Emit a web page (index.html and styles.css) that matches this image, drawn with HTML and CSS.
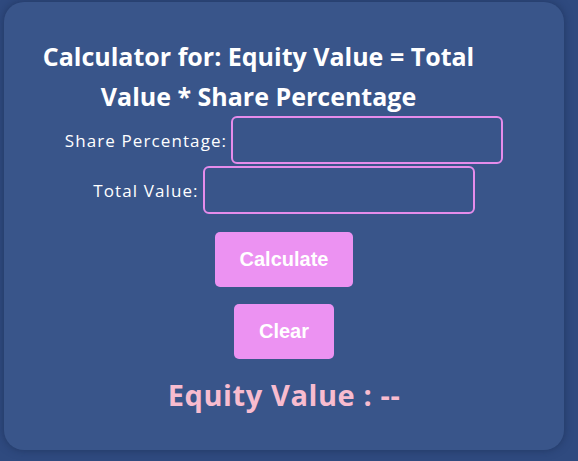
FILE: index.html
```html
<!DOCTYPE html>
<html lang="en">
<head>
<meta charset="utf-8">
<title>Equity Value Calculator</title>
<link rel="stylesheet" href="styles.css">
</head>
<body>
<main class="card">
  <h1 class="title">Calculator for: Equity Value = Total Value * Share Percentage</h1>
  <div class="row">
    <label class="label" for="share">Share Percentage:</label>
    <input class="field" id="share" type="text">
  </div>
  <div class="row">
    <label class="label" for="total">Total Value:</label>
    <input class="field" id="total" type="text">
  </div>
  <button class="btn btn-first" type="button">Calculate</button>
  <button class="btn" type="button">Clear</button>
  <p class="result">Equity Value : --</p>
</main>
</body>
</html>
```
FILE: styles.css
```css
html, body {
  margin: 0;
  padding: 0;
}
body {
  background: #2f4a7f;
  width: 578px;
  height: 461px;
  overflow: hidden;
  padding: 2px 0 0 4px;
  box-sizing: border-box;
  font-family: "Open Sans", "DejaVu Sans", sans-serif;
}
.card {
  width: 560px;
  box-sizing: border-box;
  background: #39558a;
  border-radius: 20px;
  box-shadow: 0 0 8px rgba(20, 35, 70, 0.5);
  padding: 34px 20px 34px;
  display: flex;
  flex-direction: column;
  align-items: center;
}
.title {
  margin: 0 51px 0 0;
  color: #ffffff;
  font-size: 25px;
  line-height: 40px;
  font-weight: 700;
  text-align: center;
  width: 450px;
}
.row {
  display: flex;
  align-items: center;
  gap: 4px;
  margin-bottom: 2px;
}
.label {
  color: #ffffff;
  font-size: 17px;
  letter-spacing: 1.1px;
}
.field {
  width: 272px;
  height: 48px;
  box-sizing: border-box;
  background: transparent;
  border: 2px solid #e58ceb;
  border-radius: 6px;
  margin: 0;
  padding: 0 8px;
  color: #fff;
}
.btn {
  margin-top: 17px;
  background: #ec92f2;
  color: #ffffff;
  border: none;
  border-radius: 5px;
  padding: 16px 25px;
  font-family: "Liberation Sans", Arial, sans-serif;
  font-size: 20px;
  line-height: 23px;
  font-weight: 700;
}
.btn-first {
  margin-top: 16px;
}
.result {
  margin: 15px 0 0;
  color: #f8bccf;
  font-size: 29px;
  line-height: 42px;
  font-weight: 700;
  letter-spacing: 0.6px;
}
```
